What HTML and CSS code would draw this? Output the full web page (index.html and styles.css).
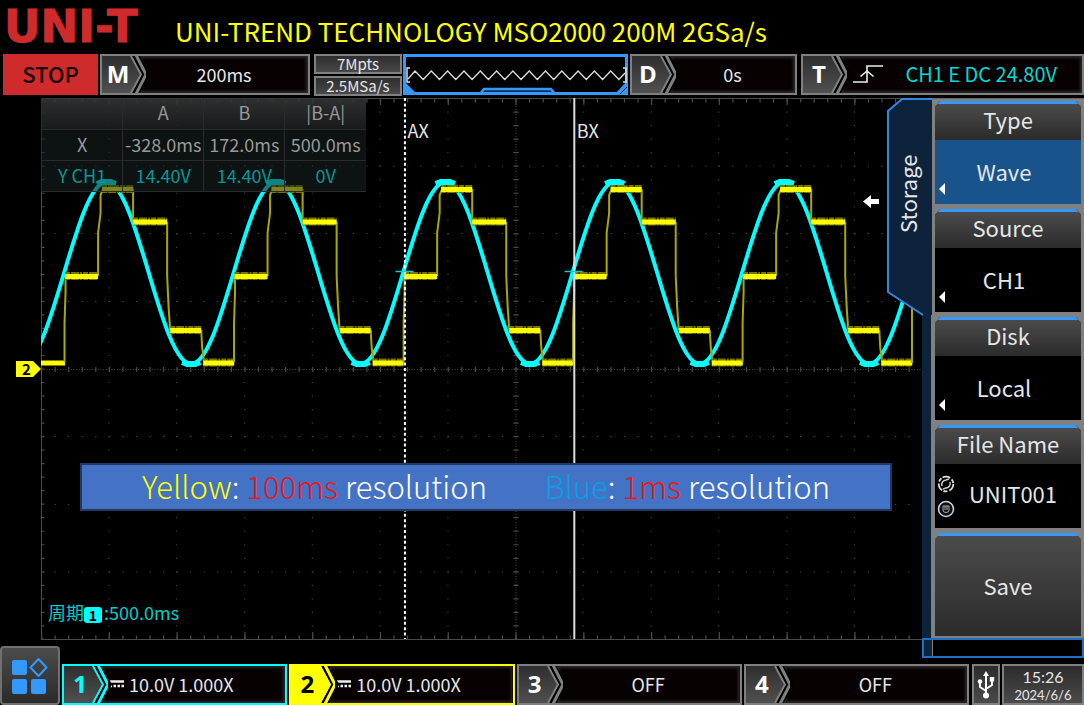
FILE: index.html
```html
<!DOCTYPE html>
<html lang="en">
<head>
  <meta charset="UTF-8"/>
  <meta name="viewport" content="width=device-width, initial-scale=1"/>
  <title>UNI-T MSO2000</title>
  <link rel="stylesheet" href="styles.css">
</head>
<body>
  <!-- shared shapes -->
  <svg class="defs" width="0" height="0" aria-hidden="true">
    <defs>
      <linearGradient id="tag-fill" x1="0" y1="0" x2="0" y2="1">
        <stop offset="0" stop-color="#2e2e2e"/>
        <stop offset="1" stop-color="#505050"/>
      </linearGradient>
      <symbol id="chevron" viewBox="0 0 44 37">
        <path class="chevron-fill" d="M0 0H30L40 18.500L30 37H0Z"/>
        <path d="M29 0L39 18.500L29 37" fill="none" stroke="currentColor" stroke-width="2"/>
        <path d="M31.500 0L41.500 18.500L31.500 37" fill="none" stroke="#000" stroke-width="2"/>
        <path d="M34 -1L44 18.500L34 38" fill="none" stroke="currentColor" stroke-width="3"/>
      </symbol>
      <symbol id="dc" viewBox="0 0 15 8">
        <path d="M0 1.500H15M0 6H3M4.500 6H7M8.500 6H11M12.500 6H15" stroke="#eee" stroke-width="2.600"/>
      </symbol>
    </defs>
  </svg>

  <header class="title-bar">
    <div class="logo">UNI-T</div>
    <h1>UNI-TREND TECHNOLOGY MSO2000 200M 2GSa/s</h1>
  </header>

  <!-- top status row -->
  <section class="status-bar">
    <button class="stop">STOP</button>
    <button class="cell timebase">
      <span class="tag"><svg><use href="#chevron"/></svg><b>M</b></span>
      <span class="value">200ms</span>
    </button>
    <div class="memory">
      <span>7Mpts</span>
      <span>2.5MSa/s</span>
    </div>
    <div class="preview">
      <svg viewBox="0 0 225 41" preserveAspectRatio="none">
        <path d="M77 40L81 35H148L152 40" fill="#0c2f55" stroke="#3399ff" stroke-width="2.500"/>
        <path d="M1.500 1.500H223.500V39.500H1.500Z" fill="none" stroke="#3399ff" stroke-width="3"/>
        <path d="M1 27L14 40H1ZM224 27V40H212Z" fill="#3399ff"/>
        <path d="M224 33L217 40" stroke="#000" stroke-width="1"/>
        <path d="M7 14H4V28H7M220 14H223V28H220" fill="none" stroke="#ddd" stroke-width="1.500"/>
        <path d="M5 25L12 17L20.200 25.500L28.300 17L36.500 25.500L44.600 17L52.800 25.500L61 17L69.100 25.500L77.300 17L85.400 25.500L93.600 17L101.700 25.500L109.900 17L118 25.500L126.200 17L134.300 25.500L142.500 17L150.700 25.500L158.800 17L167 25.500L175.100 17L183.300 25.500L191.400 17L199.600 25.500L207.700 17L215.900 25.500L222 19" fill="none" stroke="#ddd" stroke-width="1.300"/>
      </svg>
    </div>
    <button class="cell delay">
      <span class="tag"><svg><use href="#chevron"/></svg><b>D</b></span>
      <span class="value">0s</span>
    </button>
    <button class="cell trigger">
      <span class="tag"><svg><use href="#chevron"/></svg><b>T</b></span>
      <span class="value">
        <svg class="edge" viewBox="0 0 30 18"><path d="M0 17H14V1H30M7.500 11.500L14 6L20.500 11.500" fill="none" stroke="#eee" stroke-width="1.600"/></svg>
        <span>CH1 E DC 24.80V</span>
      </span>
    </button>
  </section>

  <main class="screen">
    <section class="plot">
      <svg class="trace" viewBox="0 0 880 542" preserveAspectRatio="none">
        <defs>
          <path id="sine" d="M0 266C30.800 266 53.850 84 84.650 84S138.500 266 169.300 266"/>
          <path id="crest" d="M75 86L80 84H89L94 86M-9 264L-4 266H4L9 264"/>
          <g id="steps">
            <path class="step-edge" d="M-.5 264V225L.5 195V179M33 178V135L35.500 115V97L38 91M68 91V124M102 124V178L103.500 210L105 232M136 232L137 250L139 264"/>
            <path class="step-noise" d="M0 178H33M37 91H68M68 123.500H102M105 232H136M138 264.500H168"/>
            <path class="step-level" d="M0 178.500H33M37 91.500H68M68 124H102M105 232.500H136M138 265H169"/>
          </g>
        </defs>

        <!-- graticule -->
        <g class="grid">
          <path stroke-dasharray="1.200 12.340" d="M0 68H880M0 135.500H880M0 203.500H880M0 338.500H880M0 406.500H880M0 474H880"/>
          <path stroke-dasharray="1.200 12.320" d="M68 0V541M135.500 0V541M203.500 0V541M271 0V541M338.500 0V541M406.500 0V541M541.500 0V541M609.500 0V541M677 0V541M745 0V541M812.500 0V541"/>
          <path stroke-dasharray="1 1.700" d="M0 271.500H880M474.500 0V541"/>
          <path stroke-dasharray="1.200 12.340" stroke-width="5" d="M0 271.500H880M0 2H880M0 540H880"/>
          <path stroke-dasharray="1.200 66.500" stroke-width="8" d="M0 3H880M0 538H880"/>
          <path stroke-dasharray="1.200 12.320" stroke-width="5" d="M474.500 0V541M1 0V541"/>
          <path d="M880 .5H.5V541.500H880"/>
        </g>

        <g class="ch1">
          <use href="#sine" x="-19.300"/><use href="#sine" x="150"/><use href="#sine" x="319.300"/>
          <use href="#sine" x="488.600"/><use href="#sine" x="657.900"/><use href="#sine" x="827.200"/>
          <g class="crests">
            <use href="#crest" x="-19.300"/><use href="#crest" x="150"/><use href="#crest" x="319.300"/>
            <use href="#crest" x="488.600"/><use href="#crest" x="657.900"/><use href="#crest" x="827.200"/>
          </g>
        </g>

        <g class="ch2">
          <path class="step-level" d="M0 265H24"/>
          <use href="#steps" x="24"/><use href="#steps" x="193.300"/><use href="#steps" x="362.700"/>
          <use href="#steps" x="532"/><use href="#steps" x="701.300"/>
          <path class="step-edge" d="M870 265V200"/>
        </g>

        <!-- time cursors -->
        <path d="M363.500 0V541" stroke="#fff" stroke-width="2" stroke-dasharray="3 2.400"/>
        <path d="M532.700 0V541" stroke="#ddd" stroke-width="2"/>
        <path d="M354 173.500H372M523 173.500H541" stroke="#00d0d0" stroke-width="1.500"/>
        <path d="M821 103.500L829 97V101H837V106H829V110Z" fill="#fff"/>
      </svg>

      <div class="ground-marker">2</div>
      <div class="cursor-label ax">AX</div>
      <div class="cursor-label bx">BX</div>

      <table class="readout">
        <tr><th></th><th>A</th><th>B</th><th>|B-A|</th></tr>
        <tr><td>X</td><td>-328.0ms</td><td>172.0ms</td><td>500.0ms</td></tr>
        <tr class="y-row"><td>Y CH1</td><td>14.40V</td><td>14.40V</td><td>0V</td></tr>
      </table>

      <div class="note">
        <p><span class="yellow">Yellow</span>: <span class="red">100ms</span> resolution</p>
        <p><span class="blue">Blue</span>: <span class="red">1ms</span> resolution</p>
      </div>

      <div class="measure"><span>周期</span><b>1</b><span>:500.0ms</span></div>
    </section>

    <aside class="menu">
      <button class="tab">
        <svg viewBox="0 0 45 218">
          <path d="M45 0H15L1 13V194L36 217H45Z" fill="#0c233b"/>
          <path d="M45 1H15L1 13V194L36 217" fill="none" stroke="#3386dd" stroke-width="2"/>
        </svg>
        <span>Storage</span>
      </button>
      <div class="softkeys">
        <button class="softkey active"><span class="name">Type</span><span class="choice">Wave</span></button>
        <button class="softkey"><span class="name">Source</span><span class="choice">CH1</span></button>
        <button class="softkey"><span class="name">Disk</span><span class="choice">Local</span></button>
        <button class="softkey file">
          <span class="name">File Name</span>
          <span class="choice">
            <svg viewBox="0 0 18 44">
              <circle cx="9" cy="9" r="7.300" fill="none" stroke="#ddd" stroke-width="1.800" stroke-dasharray="8 2 4 1.300"/>
              <path d="M5 11A4.500 4.500 0 0 1 9 5L12 4M13 7A4.500 4.500 0 0 1 9 13L6 14" fill="none" stroke="#ccc" stroke-width="1.400"/>
              <circle cx="9" cy="34" r="7.500" fill="#111" stroke="#b9cfe6" stroke-width="1.600"/>
              <path d="M6 31V35Q6 37.500 9 37.500T12 35V31M8 31V35M10 31V35M6 31H12" fill="none" stroke="#aaa" stroke-width="1"/>
            </svg>
            UNIT001
          </span>
        </button>
        <button class="softkey save">Save</button>
      </div>
      <div class="menu-foot"></div>
    </aside>
  </main>

  <!-- channel row -->
  <footer class="channel-bar">
    <button class="apps" aria-label="Apps">
      <svg viewBox="0 0 36 36" fill="#3399ff">
        <rect x="0" y="2" width="15" height="15" rx="2"/>
        <rect x="0" y="21" width="15" height="15" rx="2"/>
        <rect x="19" y="21" width="15" height="15" rx="2"/>
        <path d="M26.500 1L34.500 9.500L26.500 18L18.500 9.500Z" fill="none" stroke="#3399ff" stroke-width="2" stroke-linejoin="round"/>
      </svg>
    </button>
    <button class="cell channel one">
      <span class="tag"><svg><use href="#chevron"/></svg><b>1</b></span>
      <span class="value"><svg class="dc"><use href="#dc"/></svg>10.0V 1.000X</span>
    </button>
    <button class="cell channel two">
      <span class="tag"><svg><use href="#chevron"/></svg><b>2</b></span>
      <span class="value"><svg class="dc"><use href="#dc"/></svg>10.0V 1.000X</span>
    </button>
    <button class="cell channel">
      <span class="tag"><svg><use href="#chevron"/></svg><b>3</b></span>
      <span class="value">OFF</span>
    </button>
    <button class="cell channel">
      <span class="tag"><svg><use href="#chevron"/></svg><b>4</b></span>
      <span class="value">OFF</span>
    </button>
    <div class="usb">
      <svg viewBox="0 0 18 28" fill="none" stroke="#fff" stroke-width="2">
        <path d="M9 24V4M9 20L3 16V11M9 18L15 14V9"/>
        <path d="M9 0L12 5H6Z" fill="#fff" stroke="none"/>
        <circle cx="9" cy="24.500" r="3" fill="#fff" stroke="none"/>
        <circle cx="3" cy="10.500" r="2.300" fill="#fff" stroke="none"/>
        <path d="M12.800 6H17.200V10.500H12.800Z" fill="#fff" stroke="none"/>
      </svg>
    </div>
    <div class="clock"><span>15:26</span><small>2024/6/6</small></div>
  </footer>
</body>
</html>
```
FILE: styles.css
```css
:root {
  --frame: #808080;
  --blue: #3399ff;
  --cyan: #00ffff;
  --yellow: #ffff00;
  --gap: 2px;
}

* { box-sizing: border-box; }

body {
  margin: 0;
  min-height: 100vh;
  display: flex;
  flex-direction: column;
  background: #000;
  color: #e6e6e6;
  font-family: "Noto Sans CJK SC", "Noto Sans", sans-serif;
  font-size: 18px;
  line-height: 24px;
}

.defs { position: absolute; }

button {
  margin: 0;
  padding: 0;
  border: 0;
  background: none;
  color: inherit;
  font: inherit;
  cursor: pointer;
}

/* title */
.title-bar {
  display: flex;
  align-items: center;
  height: 54px;
  padding-left: 4px;
}
.logo {
  width: 171px;
  color: #cf2b2d;
  font-family: "DejaVu Sans", sans-serif;
  font-size: 45px;
  font-weight: 700;
  line-height: 50px;
  -webkit-text-stroke: 1px #cf2b2d;
}
.title-bar h1 {
  margin: 8px 0 0;
  color: var(--yellow);
  font-size: 26px;
  font-weight: 400;
  line-height: 30px;
  white-space: nowrap;
}

/* rows of framed cells */
.status-bar,
.channel-bar {
  display: flex;
  gap: var(--gap);
  height: 41px;
}
.status-bar { padding-left: 3px; }
.cell {
  display: flex;
  border: 2px solid var(--frame);
  overflow: hidden;
}
.tag {
  position: relative;
  flex: none;
  width: 44px;
  height: 37px;
  color: var(--frame);
}
.tag svg {
  display: block;
  width: 44px;
  height: 37px;
}
.tag b {
  position: absolute;
  inset: 0 12px 0 0;
  color: #fff;
  font-family: "Open Sans", sans-serif;
  font-size: 24px;
  line-height: 35px;
  text-align: center;
}
.chevron-fill { fill: var(--tag-fill, url(#tag-fill)); }
.value {
  flex: 1;
  display: flex;
  align-items: center;
  justify-content: center;
  height: 37px;
  margin-left: -6px;
  padding-bottom: 2px;
  background: #070102;
  box-shadow: inset 0 0 3px 2px #2c2829;
  clip-path: polygon(0 0, 100% 0, 100% 100%, 0 100%, 10px 50%);
}

.stop {
  width: 95px;
  padding-bottom: 4px;
  background: #cf2b2d;
  color: #140303;
  font-size: 22px;
  font-weight: 500;
}
.timebase { width: 210px; }
.memory {
  display: flex;
  flex-direction: column;
  gap: 2px;
  width: 88px;
  margin-left: 2px;
}
.memory span {
  flex: 1;
  border: 2px solid var(--frame);
  background: linear-gradient(#2e2e2e, #484848);
  font-size: 15px;
  line-height: 16px;
  text-align: center;
}
.preview { width: 225px; margin-left: -1px; }
.preview svg { display: block; width: 100%; height: 41px; }
.delay { width: 167px; }
.trigger { flex: 1; margin-left: 2px; }
.trigger .value {
  justify-content: space-between;
  padding: 0 25px 2px 12px;
  color: #00d8d8;
  font-size: 20px;
}
.edge { width: 30px; height: 18px; }

/* waveform area */
.screen {
  flex: 1;
  display: flex;
  padding-top: 3px;
  min-height: 400px;
}
.plot {
  position: relative;
  flex: 1;
  margin: 0 0 24px 41px;
}
.trace {
  position: absolute;
  inset: 0;
  width: 100%;
  height: 100%;
  overflow: hidden;
}
.grid path { fill: none; stroke: #4a4a4a; }
.ch1 { fill: none; stroke: var(--cyan); stroke-width: 4; }
.crests { stroke-width: 6; }
.ch2 { fill: none; }
.step-edge { stroke: #a8a800; stroke-width: 2; }
.step-noise { stroke: #777700; stroke-width: 8; stroke-dasharray: 5 1 8 1 2 1; }
.step-level { stroke: var(--yellow); stroke-width: 5; }

.ground-marker {
  position: absolute;
  top: 50%;
  right: 100%;
  width: 25px;
  height: 16px;
  margin-top: -8px;
  padding-right: 4px;
  background: var(--yellow);
  clip-path: polygon(0 0, 17px 0, 100% 50%, 17px 100%, 0 100%);
  color: #000;
  font-size: 15px;
  font-weight: 700;
  line-height: 15px;
  text-align: center;
}
.cursor-label {
  position: absolute;
  top: 20px;
}
.ax { left: 41.6%; }
.bx { left: 60.8%; }

.readout {
  position: absolute;
  top: 0;
  left: 0;
  width: 325px;
  table-layout: fixed;
  border-collapse: collapse;
  background: rgba(24, 32, 34, .55);
  color: #999;
}
.readout th,
.readout td {
  height: 31px;
  padding: 0 0 2px;
  border: 1px solid #2b2b2b;
  border-width: 0 0 1px 1px;
  font-weight: 400;
  text-align: center;
}
.readout th { background: linear-gradient(rgba(60, 60, 60, .7), rgba(30, 30, 30, .7)); }
.y-row { color: #009a9a; }

.note {
  position: absolute;
  right: 30px;
  bottom: 129px;
  left: 39px;
  display: flex;
  align-items: center;
  justify-content: space-between;
  height: 48px;
  padding: 0 60px;
  border: 2px solid #203864;
  background: #4472c4;
  color: #fff;
  font-size: 31px;
  font-weight: 300;
  line-height: 42px;
  white-space: nowrap;
}
.note p { margin: 0 0 2px; }
.yellow { color: var(--yellow); }
.red { color: #f01414; }
.blue { color: #00a2e8; }

.measure {
  position: absolute;
  bottom: 16px;
  left: 7px;
  display: flex;
  align-items: center;
  color: #00cccc;
}
.measure b {
  width: 18px;
  margin: 6px 2px 0 0;
  border-radius: 3px;
  background: var(--cyan);
  color: #000;
  font-size: 14px;
  line-height: 16px;
  text-align: center;
}

/* side menu */
.menu {
  position: relative;
  display: flex;
  flex-direction: column;
  width: 162px;
  margin-bottom: 6px;
  background: #0c233b;
}
.tab {
  position: absolute;
  top: 0;
  left: -35px;
  width: 45px;
  height: 218px;
}
.tab svg {
  position: absolute;
  inset: 0;
  width: 45px;
  height: 218px;
}
.tab span {
  position: absolute;
  inset: 0 4px 26px 0;
  writing-mode: vertical-rl;
  transform: rotate(180deg);
  font-size: 22px;
  line-height: 41px;
  text-align: center;
}
.softkeys {
  flex: 1;
  display: grid;
  grid-template-rows: repeat(5, 1fr);
  gap: 5px;
  margin-left: 9px;
  padding: 2px 3px 2px 4px;
  border-top: 1px solid #666;
  background: var(--frame);
}
.softkey {
  display: flex;
  flex-direction: column;
  border-top: 3px solid var(--blue);
  background: #000;
  clip-path: polygon(5px 0, calc(100% - 5px) 0, 100% 6px, 100% 100%, 0 100%, 0 6px);
  font-size: 22px;
}
.name {
  width: 100%;
  height: 36px;
  background: linear-gradient(#4b4b4b, #2b2b2b);
  line-height: 30px;
}
.choice {
  position: relative;
  flex: 1;
  display: flex;
  align-items: center;
  justify-content: center;
  width: 100%;
  padding: 0 8px 2px 0;
}
.choice::before {
  content: "";
  position: absolute;
  bottom: 9px;
  left: 4px;
  border: 6px solid transparent;
  border-right-color: #fff;
  border-left: 0;
}
.active .choice { background: #19538b; }
.file .choice { padding: 0 0 6px 10px; }
.file .choice::before { content: none; }
.file svg {
  position: absolute;
  top: 11px;
  left: 2px;
  width: 18px;
  height: 44px;
}
.save {
  align-items: center;
  justify-content: center;
  padding-bottom: 3px;
  background: linear-gradient(#4b4b4b, #2b2b2b);
}
.menu-foot {
  height: 20px;
  border: 2px solid #1f6fc4;
  background: linear-gradient(90deg, #0c233b 8px, var(--frame) 8px 9px, #000 9px);
}

/* channels */
.channel-bar { align-items: flex-end; }
.apps {
  width: 60px;
  height: 59px;
  margin-top: -18px;
  padding-top: 4px;
  border: 2px solid #707070;
  border-radius: 4px;
  background: linear-gradient(#4b4b4b, #2b2b2b);
}
.apps svg { width: 36px; height: 36px; }
.channel {
  flex: 1;
  height: 41px;
}
.one, .one .tag { border-color: var(--cyan); color: var(--cyan); }
.one .tag b { color: var(--cyan); }
.two, .two .tag { border-color: var(--yellow); color: var(--yellow); }
.two { --tag-fill: var(--yellow); }
.two .tag b { color: #000; }
.one .value,
.two .value {
  justify-content: flex-start;
  gap: 5px;
  padding-left: 7px;
  color: #e6e6e6;
}
.dc { width: 15px; height: 8px; }
.usb,
.clock {
  display: flex;
  align-items: center;
  justify-content: center;
  height: 41px;
  border: 2px solid var(--frame);
  background: linear-gradient(#2b2b2b, #4b4b4b);
}
.usb { width: 28px; margin-left: 1px; }
.usb svg { width: 18px; height: 28px; }
.clock {
  flex-direction: column;
  width: 82px;
  font-family: Lato, sans-serif;
  font-size: 16px;
  line-height: 20px;
}
.clock small { font-size: 13px; line-height: 16px; }
```
